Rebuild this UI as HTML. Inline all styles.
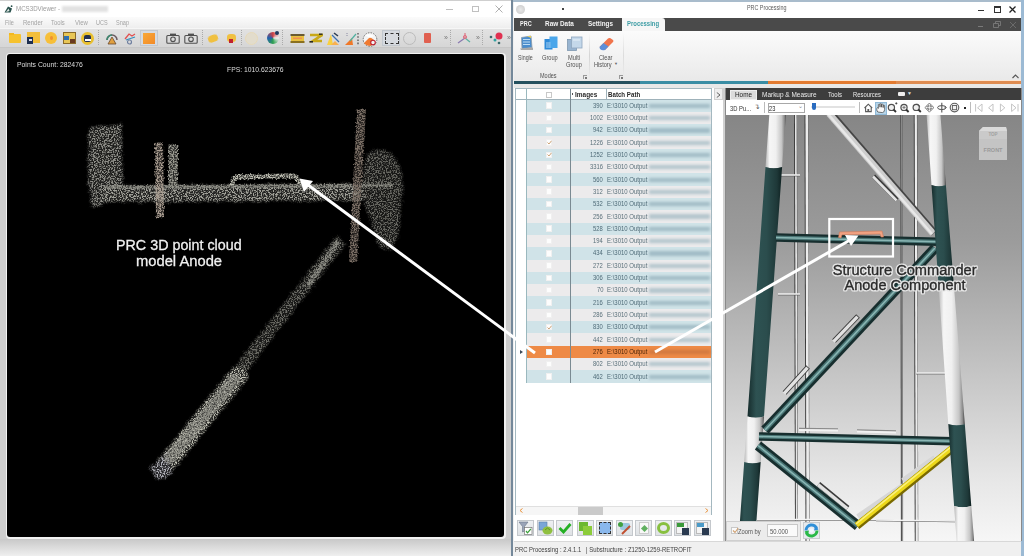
<!DOCTYPE html><html><head><meta charset="utf-8"><style>
*{margin:0;padding:0;box-sizing:border-box}
html,body{width:1024px;height:556px;overflow:hidden;background:#f0f0f0;font-family:"Liberation Sans",sans-serif}
.ab{position:absolute}
.t{position:absolute;white-space:nowrap;line-height:1}
</style></head><body>

<div class="ab" style="left:0;top:0;width:512px;height:556px;background:#d0d0d0;overflow:hidden"></div>
<div class="ab" style="left:0;top:0;width:512px;height:17px;background:#fff"></div>
<div class="ab" style="left:0;top:0;width:512px;height:1px;background:#cfcfcf"></div>
<svg class="ab" style="left:4px;top:5px" width="9" height="8" viewBox="0 0 9 8"><path d="M0.5 7.5 L4 1.5 L8 3.5 L6.5 7.5 Z" fill="#264f4a"/><path d="M2 7 L4.5 3.5 L5.5 6 Z" fill="#dfe8e6"/><circle cx="7.6" cy="1.2" r="0.9" fill="#264f4a"/></svg>
<div class="t" style="left:16.10px;top:5.40px;font-size:7.80px;color:#9a9a9a;font-weight:normal;font-family:'Liberation Sans',sans-serif;transform:scaleX(0.791);transform-origin:0 0;">MCS3DViewer -</div>
<div class="ab" style="left:62px;top:6px;width:46px;height:6px;background:#e2e2e2;filter:blur(1.3px)"></div>
<div class="ab" style="left:446px;top:9px;width:7px;height:1px;background:#bdbdbd"></div>
<div class="ab" style="left:472px;top:5.5px;width:6.5px;height:6.5px;border:1px solid #c0c0c0"></div>
<svg class="ab" style="left:495px;top:5px" width="8" height="8"><path d="M0.5 0.5L7.5 7.5M7.5 0.5L0.5 7.5" stroke="#b0b0b0" stroke-width="1"/></svg>
<div class="ab" style="left:0;top:17px;width:512px;height:11px;background:linear-gradient(#fbfbfb,#eeeeee)"></div>
<div class="t" style="left:4.80px;top:18.85px;font-size:7.50px;color:#a4a4a4;font-weight:normal;font-family:'Liberation Sans',sans-serif;transform:scaleX(0.736);transform-origin:0 0;">File</div>
<div class="t" style="left:22.60px;top:18.85px;font-size:7.50px;color:#a4a4a4;font-weight:normal;font-family:'Liberation Sans',sans-serif;transform:scaleX(0.805);transform-origin:0 0;">Render</div>
<div class="t" style="left:51.30px;top:18.85px;font-size:7.50px;color:#a4a4a4;font-weight:normal;font-family:'Liberation Sans',sans-serif;transform:scaleX(0.782);transform-origin:0 0;">Tools</div>
<div class="t" style="left:74.60px;top:18.85px;font-size:7.50px;color:#a4a4a4;font-weight:normal;font-family:'Liberation Sans',sans-serif;transform:scaleX(0.800);transform-origin:0 0;">View</div>
<div class="t" style="left:95.80px;top:18.85px;font-size:7.50px;color:#a4a4a4;font-weight:normal;font-family:'Liberation Sans',sans-serif;transform:scaleX(0.733);transform-origin:0 0;">UCS</div>
<div class="t" style="left:116.30px;top:18.85px;font-size:7.50px;color:#a4a4a4;font-weight:normal;font-family:'Liberation Sans',sans-serif;transform:scaleX(0.742);transform-origin:0 0;">Snap</div>
<div class="ab" style="left:0;top:28px;width:512px;height:20px;background:linear-gradient(#e2e2e2,#d6d6d6);border-top:1px solid #f6f6f6;border-bottom:1px solid #c6c6c6"></div>
<div class="ab" style="left:98px;top:30px;width:1px;height:16px;background:repeating-linear-gradient(#aaa 0 1px,transparent 1px 2px)"></div>
<div class="ab" style="left:202px;top:30px;width:1px;height:16px;background:repeating-linear-gradient(#aaa 0 1px,transparent 1px 2px)"></div>
<div class="ab" style="left:241px;top:30px;width:1px;height:16px;background:repeating-linear-gradient(#aaa 0 1px,transparent 1px 2px)"></div>
<div class="ab" style="left:282px;top:30px;width:1px;height:16px;background:repeating-linear-gradient(#aaa 0 1px,transparent 1px 2px)"></div>
<div class="ab" style="left:450px;top:30px;width:1px;height:16px;background:repeating-linear-gradient(#aaa 0 1px,transparent 1px 2px)"></div>
<div class="ab" style="left:482px;top:30px;width:1px;height:16px;background:repeating-linear-gradient(#aaa 0 1px,transparent 1px 2px)"></div>
<div class="ab" style="left:140px;top:30px;width:18px;height:16px;background:#d6dae0;border:1px solid #c2c8cf"></div>
<div class="ab" style="left:382px;top:30px;width:18px;height:16px;background:#d6dae0;border:1px solid #c2c8cf"></div>
<div class="ab" style="left:9px;top:34px;width:12px;height:9px;background:#f6c22e;border-radius:1px;filter:blur(0.3px);"></div><div class="ab" style="left:9px;top:33px;width:5px;height:2px;background:#f3b820;filter:blur(0.3px);"></div>
<div class="ab" style="left:27px;top:32px;width:13px;height:11px;background:#f2be3a;filter:blur(0.3px);"></div><div class="ab" style="left:27px;top:37px;width:6px;height:7px;background:#1f3050;filter:blur(0.3px);"></div><div class="ab" style="left:28.5px;top:39px;width:3px;height:2px;background:#dde;filter:blur(0.3px);"></div>
<div class="ab" style="left:45px;top:32px;width:12px;height:12px;background:#f7bf38;border-radius:50%;filter:blur(0.3px);"></div><div class="ab" style="left:49.5px;top:36px;width:3px;height:4px;background:#f09030;border-radius:50%;filter:blur(0.3px);"></div>
<div class="ab" style="left:63px;top:32px;width:13px;height:12px;background:#e8c656;border:1px solid #8a6a28;filter:blur(0.3px);"></div><div class="ab" style="left:64px;top:36px;width:5px;height:4px;background:#2f70b0;filter:blur(0.3px);"></div><div class="ab" style="left:70px;top:39px;width:5px;height:4px;background:#6a3a20;filter:blur(0.3px);"></div>
<div class="ab" style="left:81px;top:32px;width:13px;height:13px;background:#e9c030;border-radius:50%;filter:blur(0.3px);"></div><div class="ab" style="left:84px;top:34.5px;width:7px;height:7px;background:#243050;border-radius:2px;filter:blur(0.3px);"></div><div class="ab" style="left:84.5px;top:39px;width:6px;height:2px;background:#fff;filter:blur(0.3px);"></div>
<svg class="ab" style="left:105px;top:32px;filter:blur(0.3px);" width="14" height="13"><path d="M2 8 A5 5 0 0 1 12 8" stroke="#6a5a60" stroke-width="1.5" fill="none"/><path d="M2 8 A5 5 0 0 1 7 3" stroke="#3a8a70" stroke-width="1.5" fill="none"/><path d="M7 5 L3 12 L11 12 Z" fill="#e0a040" stroke="#6a4a30" stroke-width="0.8"/></svg>
<svg class="ab" style="left:123px;top:32px;filter:blur(0.3px);" width="14" height="13"><path d="M2 7 L6 2 L9 4 L12 2" stroke="#e05050" stroke-width="1.3" fill="none"/><path d="M3 8 L12 5" stroke="#3090c0" stroke-width="1.3"/><circle cx="6.5" cy="10" r="2" stroke="#7080a0" stroke-width="1.2" fill="none"/></svg>
<div class="ab" style="left:143px;top:33px;width:12px;height:11px;background:linear-gradient(135deg,#f8a838,#f28a28);filter:blur(0.3px);"></div>
<svg class="ab" style="left:166px;top:33px;filter:blur(0.3px);" width="14" height="11"><rect x="0.8" y="2.5" width="12.4" height="7.7" rx="1" stroke="#505050" stroke-width="1.1" fill="none"/><rect x="4" y="0.6" width="6" height="2" fill="#505050"/><circle cx="7" cy="6.3" r="2.3" stroke="#505050" stroke-width="1.1" fill="none"/></svg>
<svg class="ab" style="left:184px;top:33px;filter:blur(0.3px);" width="14" height="11"><rect x="0.8" y="2.5" width="12.4" height="7.7" rx="1" stroke="#505050" stroke-width="1.1" fill="none"/><rect x="4" y="0.6" width="6" height="2" fill="#505050"/><circle cx="7" cy="6.3" r="2.3" stroke="#505050" stroke-width="1.1" fill="none"/></svg>
<div class="ab" style="left:208px;top:35px;width:10px;height:7px;background:#f0c040;border-radius:40%;transform:rotate(-20deg);filter:blur(0.3px);"></div>
<div class="ab" style="left:227px;top:34px;width:9px;height:8px;background:#f0c040;border-radius:40%;filter:blur(0.3px);"></div><div class="ab" style="left:229px;top:39px;width:4px;height:4px;background:#c02030;filter:blur(0.3px);"></div>
<div class="ab" style="left:245px;top:32px;width:13px;height:13px;border:1px solid #e6d9b8;background:#e2dccc;border-radius:50%;filter:blur(0.3px);"></div>
<div class="ab" style="left:267px;top:32px;width:12px;height:12px;border-radius:50%;background:conic-gradient(#d04040,#f0f0f0,#30a050,#2060b0,#d04040);filter:blur(0.3px);"></div><div class="ab" style="left:275px;top:31px;width:4px;height:4px;border-radius:50%;background:#203a60;filter:blur(0.3px);"></div>
<svg class="ab" style="left:290px;top:33px;filter:blur(0.35px)" width="15" height="11"><rect x="0.5" y="1" width="14" height="2" fill="#6a5a30"/><rect x="1" y="3" width="13" height="5" fill="#e8c040"/><rect x="3" y="4.5" width="9" height="1.5" fill="#f09050"/><rect x="0.5" y="8" width="14" height="2" fill="#8a7020"/></svg>
<svg class="ab" style="left:309px;top:33px;filter:blur(0.35px)" width="14" height="11"><path d="M1 2 H13 L4 8 H13" stroke="#c8a818" stroke-width="2.6" fill="none"/><path d="M0.5 8.8 H4" stroke="#2a2a20" stroke-width="1.6"/><path d="M10 1.2 H13.5" stroke="#2a2a20" stroke-width="1.4"/></svg>
<svg class="ab" style="left:326px;top:32px;filter:blur(0.35px)" width="15" height="14"><path d="M1 13 L5 2 L7 13 Z" fill="#f8d040"/><path d="M5 13 L13 13 L9 9 Z" fill="#f8b050"/><path d="M6 3 L13 10" stroke="#3a70b0" stroke-width="1.2"/><path d="M8 1 L12 4" stroke="#2a3a50" stroke-width="1.5"/></svg>
<svg class="ab" style="left:344px;top:32px;filter:blur(0.35px)" width="16" height="14"><path d="M1 13 L8 6 L9 13 Z" fill="#f07828"/><path d="M14 1 V13" stroke="#444" stroke-width="1.2" stroke-dasharray="1.6 1.6"/><path d="M3 1 V4" stroke="#8888a0" stroke-dasharray="1 1"/><path d="M6 9 L12 2" stroke="#50b0a0" stroke-width="1.2"/></svg>
<svg class="ab" style="left:362px;top:31.5px;filter:blur(0.35px)" width="16" height="15"><circle cx="8" cy="7.5" r="6.8" fill="#f4f4f4" stroke="#666" stroke-width="0.9" stroke-dasharray="1.5 1.2"/><path d="M2 11 L8 5 L12 8 L9 14 Q4 14 2 11 Z" fill="#f07a30"/><path d="M3 3 Q8 1 12 4 L8 6 Z" fill="#fff"/><circle cx="11" cy="10.5" r="2.3" fill="#f4f4f4" stroke="#c02030" stroke-width="1.1"/></svg>
<div class="ab" style="left:385px;top:33px;width:14px;height:11px;border:1.3px dashed #333;filter:blur(0.3px);"></div>
<div class="ab" style="left:403px;top:32px;width:13px;height:13px;border:1px solid #bbb;border-radius:50%;filter:blur(0.3px);"></div>
<div class="ab" style="left:424px;top:33px;width:7px;height:10px;background:#e06050;border-radius:1px;filter:blur(0.3px);"></div>
<div class="t" style="left:444px;top:34px;font-size:7px;color:#777;filter:blur(0.3px);">&raquo;</div>
<div class="t" style="left:476px;top:34px;font-size:7px;color:#777;filter:blur(0.3px);">&raquo;</div>
<div class="t" style="left:507px;top:34px;font-size:7px;color:#777;filter:blur(0.3px);">&raquo;</div>
<svg class="ab" style="left:457px;top:32px;filter:blur(0.3px);" width="15" height="13"><path d="M1 11 L8 6" stroke="#8a7ab0" stroke-width="1.2"/><path d="M8 6 L13 10" stroke="#5ab0a0" stroke-width="1.2"/><path d="M8 6 V1" stroke="#e07080" stroke-width="1.2"/><circle cx="8" cy="5" r="1.6" fill="none" stroke="#e07080"/></svg>
<svg class="ab" style="left:489px;top:32px;filter:blur(0.3px);" width="14" height="13"><circle cx="10" cy="4" r="3.5" fill="#e03050"/><circle cx="2" cy="5" r="1.3" fill="#3a6a6a"/><circle cx="6" cy="8" r="1.5" fill="#30a0a0"/><circle cx="10" cy="11" r="1.3" fill="#3a6a6a"/></svg>
<div class="ab" style="left:0;top:48px;width:512px;height:508px;background:#cdcdcd"></div>
<div class="ab" style="left:6px;top:53px;width:500px;height:486px;background:#f2f2f2;border-radius:4px"></div>
<div class="ab" style="left:0;top:539px;width:512px;height:17px;background:linear-gradient(#c8c8c8,#efefef)"></div>
<div class="ab" style="left:7px;top:54px;width:497px;height:483px;background:#000;border-radius:3px"></div>
<div class="t" style="left:17.00px;top:61.10px;font-size:7.80px;color:#dcdcdc;font-weight:normal;font-family:'Liberation Sans',sans-serif;transform:scaleX(0.877);transform-origin:0 0;">Points Count: 282476</div>
<div class="t" style="left:227.10px;top:66.30px;font-size:7.80px;color:#dcdcdc;font-weight:normal;font-family:'Liberation Sans',sans-serif;transform:scaleX(0.871);transform-origin:0 0;">FPS: 1010.623676</div>
<svg class="ab" style="left:0;top:0" width="1024" height="556" viewBox="0 0 1024 556">
<defs>
<clipPath id="vpc"><rect x="7" y="54" width="497" height="483" rx="3"/></clipPath>
<filter id="spk" x="0" y="0" width="1024" height="556" filterUnits="userSpaceOnUse">
  <feTurbulence type="fractalNoise" baseFrequency="0.35" numOctaves="2" seed="3" result="dn"/>
  <feDisplacementMap in="SourceGraphic" in2="dn" scale="7" xChannelSelector="R" yChannelSelector="G" result="d"/>
  <feGaussianBlur in="d" stdDeviation="1.2" result="b"/>
  <feTurbulence type="fractalNoise" baseFrequency="0.75" numOctaves="3" seed="11" result="n"/>
  <feColorMatrix in="n" type="matrix" values="0 0 0 0 0  0 0 0 0 0  0 0 0 0 0  0 0 0 6.0 -2.7" result="m"/>
  <feComposite in="b" in2="m" operator="in" result="s"/>
  <feComponentTransfer in="b" result="haze"><feFuncA type="linear" slope="0.22"/></feComponentTransfer>
  <feMerge><feMergeNode in="haze"/><feMergeNode in="s"/></feMerge>
</filter>
<filter id="spk2" x="0" y="0" width="1024" height="556" filterUnits="userSpaceOnUse">
  <feTurbulence type="fractalNoise" baseFrequency="0.5" numOctaves="2" seed="8" result="dn"/>
  <feDisplacementMap in="SourceGraphic" in2="dn" scale="4" xChannelSelector="R" yChannelSelector="G" result="d"/>
  <feGaussianBlur in="d" stdDeviation="0.6" result="b"/>
  <feTurbulence type="fractalNoise" baseFrequency="0.75" numOctaves="3" seed="5" result="n"/>
  <feColorMatrix in="n" type="matrix" values="0 0 0 0 0  0 0 0 0 0  0 0 0 0 0  0 0 0 5.0 -2.0" result="m"/>
  <feComposite in="b" in2="m" operator="in" result="s"/>
  <feComponentTransfer in="b" result="haze"><feFuncA type="linear" slope="0.3"/></feComponentTransfer>
  <feMerge><feMergeNode in="haze"/><feMergeNode in="s"/></feMerge>
</filter>
</defs>
<g clip-path="url(#vpc)">
<g filter="url(#spk)" stroke="none">
  <path d="M89 127 L121 125 L123 190 L112 193 L101 206 L92 207 L88 180 Z" fill="#8c8c86"/>
  <path d="M102 186 L392 184 L394 200 L102 202 Z" fill="#a0a098"/>
  <path d="M366 160 C368 148 386 146 396 158 C404 170 404 192 400 206 C402 222 398 240 392 248 C386 252 378 248 376 240 L372 222 L366 208 C362 196 362 176 366 160 Z" fill="#686862"/>
  <line x1="341" y1="240" x2="232" y2="380" stroke="#6e6e68" stroke-width="12"/>
  <line x1="238" y1="376" x2="166" y2="464" stroke="#c4c4b8" stroke-width="18" stroke-linecap="round"/><path d="M150 468 L168 452 L172 474 L158 480 Z" fill="#b0b0b8"/>
</g>
<g filter="url(#spk2)" stroke="none">
  <path d="M104 185.5 L392 183.5 L392 187 L104 189 Z" fill="#8c8c84"/>
  <path d="M155 143 L163 142 L164 217 L156 218 Z" fill="#a89c90"/>
  <path d="M168 145 L178 144 L178 188 L168 188 Z" fill="#98988e"/>
  <path d="M230 186 C230 178 232 175 238 174.5 L292 173.5 C298 173.5 300 177 302 185 L297.5 185 C296 180 295 178.5 291 178.5 L238 179.5 C235 179.5 234.5 182 234.5 186 Z" fill="#bcbcb0"/>
  <path d="M357 109 L366 109 L357 262 L349 262 Z" fill="#7c7066"/>
  <path d="M306 284 L336 240 L340 243 L310 287 Z" fill="#8c8c84"/>
  <line x1="234" y1="380" x2="170" y2="458" stroke="#8a8a82" stroke-width="12" stroke-linecap="round"/>
</g>
</g>
</svg>
<div class="t" style="left:116.20px;top:237.38px;font-size:15.50px;color:#f0f0f0;font-weight:normal;font-family:'Liberation Sans',sans-serif;transform:scaleX(0.923);transform-origin:0 0;-webkit-text-stroke:0.3px #f0f0f0;">PRC 3D point cloud</div>
<div class="t" style="left:136.00px;top:253.08px;font-size:15.50px;color:#f0f0f0;font-weight:normal;font-family:'Liberation Sans',sans-serif;transform:scaleX(0.951);transform-origin:0 0;-webkit-text-stroke:0.3px #f0f0f0;">model Anode</div>
<div class="ab" style="left:512px;top:0;width:512px;height:556px;background:#f0f0f0"></div>
<div class="ab" style="left:512px;top:0;width:512px;height:1.5px;background:#a9bccc"></div>
<div class="ab" style="left:511.2px;top:0;width:2.2px;height:556px;background:#74889a"></div>
<div class="ab" style="left:1021px;top:0;width:3px;height:556px;background:#9cbad4"></div>
<div class="ab" style="left:513.5px;top:1.5px;width:507.5px;height:16.5px;background:#fff"></div>
<div class="ab" style="left:516px;top:4.5px;width:9px;height:9px;border-radius:50%;background:radial-gradient(#e8e8e8,#c8c8c8)"></div>
<div class="ab" style="left:561.5px;top:8px;width:2px;height:2px;background:#444"></div>
<div class="t" style="left:747.20px;top:5.14px;font-size:6.80px;color:#5a5a5a;font-weight:normal;font-family:'Liberation Sans',sans-serif;transform:scaleX(0.790);transform-origin:0 0;">PRC Processing</div>
<div class="ab" style="left:977.5px;top:9.5px;width:6px;height:1.3px;background:#333"></div>
<div class="ab" style="left:994px;top:5.5px;width:7px;height:7px;border:1px solid #333;border-top-width:2px"></div>
<svg class="ab" style="left:1009px;top:6px" width="7" height="7"><path d="M0.5 0.5L6.5 6.5M6.5 0.5L0.5 6.5" stroke="#222" stroke-width="1.3"/></svg>
<div class="ab" style="left:513.5px;top:18px;width:507.5px;height:13px;background:#4a4a4a"></div>
<div class="t" style="left:519.80px;top:21.06px;font-size:6.90px;color:#f4f4f4;font-weight:bold;font-family:'Liberation Sans',sans-serif;transform:scaleX(0.803);transform-origin:0 0;">PRC</div>
<div class="t" style="left:544.80px;top:21.06px;font-size:6.90px;color:#f4f4f4;font-weight:bold;font-family:'Liberation Sans',sans-serif;transform:scaleX(0.930);transform-origin:0 0;">Raw Data</div>
<div class="t" style="left:587.80px;top:21.06px;font-size:6.90px;color:#f4f4f4;font-weight:bold;font-family:'Liberation Sans',sans-serif;transform:scaleX(0.918);transform-origin:0 0;">Settings</div>
<div class="ab" style="left:622px;top:18px;width:42.5px;height:13px;background:#f6f6f6;border-radius:0 3px 0 0"></div>
<div class="t" style="left:626.80px;top:21.06px;font-size:6.90px;color:#3c9ca4;font-weight:bold;font-family:'Liberation Sans',sans-serif;transform:scaleX(0.863);transform-origin:0 0;">Processing</div>
<div class="ab" style="left:978px;top:25.5px;width:5px;height:1px;background:#7a7a7a"></div>
<svg class="ab" style="left:993px;top:21px" width="8" height="7"><path d="M0.5 2.5 H5.5 V6.5 H0.5 Z M2.5 2.5 V0.5 H7.5 V4.5 H5.5" stroke="#7a7a7a" stroke-width="0.9" fill="none"/></svg>
<svg class="ab" style="left:1010px;top:22px" width="6" height="6"><path d="M0 0L6 6M6 0L0 6" stroke="#6e6e6e" stroke-width="0.9"/></svg>
<div class="ab" style="left:513.5px;top:31px;width:507.5px;height:50px;background:linear-gradient(#fbfbfb,#e9e9e9)"></div>
<div class="ab" style="left:588.8px;top:33px;width:1px;height:46px;background:linear-gradient(transparent,#d4d4d4,transparent)"></div>
<div class="ab" style="left:623px;top:33px;width:1px;height:46px;background:linear-gradient(transparent,#dcdcdc,transparent)"></div>
<svg class="ab" style="left:519px;top:35px" width="15" height="16"><path d="M2.5 2.5 L12 1 L13 12.5 L3 13.5 Z" fill="#4a8ccc" stroke="#8a9aa8" stroke-width="0.8"/><path d="M4 4.5H11M4 7H11M4 9.5H11" stroke="#bcdcf4" stroke-width="1"/><path d="M8 1 L12 1 L12 3 Z" fill="#f0d050"/><path d="M1 13.5 L14 12.5 L14 15 L2 15Z" fill="#a8a8a8"/></svg>
<svg class="ab" style="left:543.5px;top:36px" width="14" height="14"><rect x="0.5" y="3" width="8" height="10.5" fill="#2e8ad8"/><rect x="5.5" y="0.5" width="8" height="11.5" fill="#4aa6ea"/><path d="M2 7H6.5M2 9H6.5M2 11H6.5" stroke="#cfe6fa" stroke-width="0.8"/></svg>
<svg class="ab" style="left:567px;top:36px" width="16" height="15"><rect x="0.5" y="3.5" width="9" height="11" fill="#98b4d0" stroke="#7f98b0" stroke-width="0.8"/><rect x="4.5" y="1" width="10.5" height="11" fill="#c4d8ea" stroke="#8ea6be" stroke-width="0.8"/><path d="M6 4H13" stroke="#e8f2fa"/></svg>
<svg class="ab" style="left:598px;top:35.5px" width="17" height="15"><path d="M1.5 11 L10 2.5 Q11 1.5 12.5 2.3 L15 4 Q16 5 15 6 L7 14 Z" fill="#f0744c"/><path d="M1.5 11 L5.5 7 L10.5 10.5 L7 14 Q4 15 2 13 Z" fill="#5c8ed8"/></svg>
<div class="t" style="left:518.40px;top:55.18px;font-size:6.40px;color:#505050;font-weight:normal;font-family:'Liberation Sans',sans-serif;transform:scaleX(0.826);transform-origin:0 0;">Single</div>
<div class="t" style="left:541.90px;top:55.18px;font-size:6.40px;color:#505050;font-weight:normal;font-family:'Liberation Sans',sans-serif;transform:scaleX(0.888);transform-origin:0 0;">Group</div>
<div class="t" style="left:568.00px;top:55.18px;font-size:6.40px;color:#505050;font-weight:normal;font-family:'Liberation Sans',sans-serif;transform:scaleX(0.888);transform-origin:0 0;">Multi</div>
<div class="t" style="left:565.90px;top:61.98px;font-size:6.40px;color:#505050;font-weight:normal;font-family:'Liberation Sans',sans-serif;transform:scaleX(0.891);transform-origin:0 0;">Group</div>
<div class="t" style="left:598.75px;top:55.18px;font-size:6.40px;color:#505050;font-weight:normal;font-family:'Liberation Sans',sans-serif;transform:scaleX(0.879);transform-origin:0 0;">Clear</div>
<div class="t" style="left:594.00px;top:61.98px;font-size:6.40px;color:#505050;font-weight:normal;font-family:'Liberation Sans',sans-serif;transform:scaleX(0.884);transform-origin:0 0;">History</div>
<div class="t" style="left:539.90px;top:72.88px;font-size:6.40px;color:#505050;font-weight:normal;font-family:'Liberation Sans',sans-serif;transform:scaleX(0.864);transform-origin:0 0;">Modes</div>
<div class="t" style="left:614px;top:62px;font-size:4px;color:#666">&#9660;</div>
<div class="ab" style="left:582.5px;top:74.5px;width:4px;height:4px;border-left:0.8px solid #999;border-top:0.8px solid #999"></div><div class="ab" style="left:584.5px;top:76.5px;width:2px;height:2px;background:#777"></div>
<div class="ab" style="left:619px;top:74.5px;width:4px;height:4px;border-left:0.8px solid #999;border-top:0.8px solid #999"></div><div class="ab" style="left:621px;top:76.5px;width:2px;height:2px;background:#777"></div>
<svg class="ab" style="left:1011.5px;top:74px" width="7" height="5"><path d="M0.5 4 L3.5 1 L6.5 4" stroke="#555" stroke-width="1.1" fill="none"/></svg>
<div class="ab" style="left:513.5px;top:81px;width:126.5px;height:3.3px;background:#24505e"></div>
<div class="ab" style="left:640px;top:81px;width:127.5px;height:3.3px;background:#3a8da4"></div>
<div class="ab" style="left:767.5px;top:81px;width:128.5px;height:3.3px;background:#e27a30"></div>
<div class="ab" style="left:896px;top:81px;width:125px;height:3.3px;background:#de8c52"></div>
<div class="ab" style="left:767.5px;top:80.2px;width:253.5px;height:0.8px;background:#fbe6d4"></div>
<div class="ab" style="left:513.5px;top:84.3px;width:507.5px;height:3.7px;background:#e8e8e8"></div>
<div class="ab" style="left:513.5px;top:88px;width:210px;height:453px;background:#fff"></div>
<div class="ab" style="left:723px;top:88px;width:2px;height:453px;background:#d0d0d0"></div>
<div class="ab" style="left:514.5px;top:88px;width:197px;height:427px;border:1px solid #a4b8c0;background:#fff"></div>
<div class="ab" style="left:515.5px;top:89px;width:195px;height:10.5px;background:#fff;border-bottom:1px solid #9fb2ba"></div>
<div class="ab" style="left:545.5px;top:91.5px;width:6px;height:6px;border:0.8px solid #c8c8c8;background:#fff"></div>
<div class="t" style="left:574.50px;top:90.67px;font-size:7.00px;color:#2a2a2a;font-weight:bold;font-family:'Liberation Sans',sans-serif;transform:scaleX(0.924);transform-origin:0 0;">Images</div>
<div class="t" style="left:607.80px;top:90.67px;font-size:7.00px;color:#2a2a2a;font-weight:bold;font-family:'Liberation Sans',sans-serif;transform:scaleX(0.881);transform-origin:0 0;">Batch Path</div>
<div class="ab" style="left:572px;top:93px;width:1px;height:2px;background:#555"></div>
<div class="ab" style="left:526.5px;top:99.50px;width:184.5px;height:12.31px;background:#d0e3e8"></div>
<div class="ab" style="left:649px;top:103.70px;width:61px;height:4.2px;background:#9fbac4;filter:blur(1.4px)"></div>
<div class="t" style="left:593.24px;top:102.74px;font-size:6.80px;color:#4f6b78;font-weight:normal;font-family:'Liberation Sans',sans-serif;transform:scaleX(0.860);transform-origin:0 0;">390</div>
<div class="t" style="left:607.00px;top:102.74px;font-size:6.80px;color:#4f6b78;font-weight:normal;font-family:'Liberation Sans',sans-serif;transform:scaleX(0.883);transform-origin:0 0;">E:\3010 Output</div>
<div class="ab" style="left:545.5px;top:102.30px;width:6.5px;height:6.5px;background:#fdfdfd;border:0.5px solid #f0f0f0"></div>
<div class="ab" style="left:526.5px;top:111.81px;width:184.5px;height:12.31px;background:#ecebec"></div>
<div class="ab" style="left:649px;top:116.01px;width:61px;height:4.2px;background:#b2c4cc;filter:blur(1.4px)"></div>
<div class="t" style="left:589.99px;top:115.05px;font-size:6.80px;color:#5a707a;font-weight:normal;font-family:'Liberation Sans',sans-serif;transform:scaleX(0.860);transform-origin:0 0;">1002</div>
<div class="t" style="left:607.00px;top:115.05px;font-size:6.80px;color:#5a707a;font-weight:normal;font-family:'Liberation Sans',sans-serif;transform:scaleX(0.883);transform-origin:0 0;">E:\3010 Output</div>
<div class="ab" style="left:545.5px;top:114.61px;width:6.5px;height:6.5px;background:#fdfdfd;border:0.5px solid #f0f0f0"></div>
<div class="ab" style="left:526.5px;top:124.12px;width:184.5px;height:12.31px;background:#d0e3e8"></div>
<div class="ab" style="left:649px;top:128.32px;width:61px;height:4.2px;background:#9fbac4;filter:blur(1.4px)"></div>
<div class="t" style="left:593.24px;top:127.36px;font-size:6.80px;color:#4f6b78;font-weight:normal;font-family:'Liberation Sans',sans-serif;transform:scaleX(0.860);transform-origin:0 0;">942</div>
<div class="t" style="left:607.00px;top:127.36px;font-size:6.80px;color:#4f6b78;font-weight:normal;font-family:'Liberation Sans',sans-serif;transform:scaleX(0.883);transform-origin:0 0;">E:\3010 Output</div>
<div class="ab" style="left:545.5px;top:126.92px;width:6.5px;height:6.5px;background:#fdfdfd;border:0.5px solid #f0f0f0"></div>
<div class="ab" style="left:526.5px;top:136.43px;width:184.5px;height:12.31px;background:#ecebec"></div>
<div class="ab" style="left:649px;top:140.63px;width:61px;height:4.2px;background:#b2c4cc;filter:blur(1.4px)"></div>
<div class="t" style="left:589.99px;top:139.67px;font-size:6.80px;color:#5a707a;font-weight:normal;font-family:'Liberation Sans',sans-serif;transform:scaleX(0.860);transform-origin:0 0;">1226</div>
<div class="t" style="left:607.00px;top:139.67px;font-size:6.80px;color:#5a707a;font-weight:normal;font-family:'Liberation Sans',sans-serif;transform:scaleX(0.883);transform-origin:0 0;">E:\3010 Output</div>
<div class="ab" style="left:545.5px;top:139.23px;width:6.5px;height:6.5px;background:#fdfdfd;border:0.5px solid #f0f0f0"></div>
<svg class="ab" style="left:546.5px;top:139.93px" width="5" height="5"><path d="M0.5 2.5 L2 4 L4.5 0.8" stroke="#c89868" stroke-width="0.9" fill="none"/></svg>
<div class="ab" style="left:526.5px;top:148.74px;width:184.5px;height:12.31px;background:#d0e3e8"></div>
<div class="ab" style="left:649px;top:152.94px;width:61px;height:4.2px;background:#9fbac4;filter:blur(1.4px)"></div>
<div class="t" style="left:589.99px;top:151.98px;font-size:6.80px;color:#4f6b78;font-weight:normal;font-family:'Liberation Sans',sans-serif;transform:scaleX(0.860);transform-origin:0 0;">1252</div>
<div class="t" style="left:607.00px;top:151.98px;font-size:6.80px;color:#4f6b78;font-weight:normal;font-family:'Liberation Sans',sans-serif;transform:scaleX(0.883);transform-origin:0 0;">E:\3010 Output</div>
<div class="ab" style="left:545.5px;top:151.54px;width:6.5px;height:6.5px;background:#fdfdfd;border:0.5px solid #f0f0f0"></div>
<svg class="ab" style="left:546.5px;top:152.24px" width="5" height="5"><path d="M0.5 2.5 L2 4 L4.5 0.8" stroke="#c89868" stroke-width="0.9" fill="none"/></svg>
<div class="ab" style="left:526.5px;top:161.05px;width:184.5px;height:12.31px;background:#ecebec"></div>
<div class="ab" style="left:649px;top:165.25px;width:61px;height:4.2px;background:#b2c4cc;filter:blur(1.4px)"></div>
<div class="t" style="left:589.99px;top:164.29px;font-size:6.80px;color:#5a707a;font-weight:normal;font-family:'Liberation Sans',sans-serif;transform:scaleX(0.860);transform-origin:0 0;">3316</div>
<div class="t" style="left:607.00px;top:164.29px;font-size:6.80px;color:#5a707a;font-weight:normal;font-family:'Liberation Sans',sans-serif;transform:scaleX(0.883);transform-origin:0 0;">E:\3010 Output</div>
<div class="ab" style="left:545.5px;top:163.85px;width:6.5px;height:6.5px;background:#fdfdfd;border:0.5px solid #f0f0f0"></div>
<div class="ab" style="left:526.5px;top:173.36px;width:184.5px;height:12.31px;background:#d0e3e8"></div>
<div class="ab" style="left:649px;top:177.56px;width:61px;height:4.2px;background:#9fbac4;filter:blur(1.4px)"></div>
<div class="t" style="left:593.24px;top:176.60px;font-size:6.80px;color:#4f6b78;font-weight:normal;font-family:'Liberation Sans',sans-serif;transform:scaleX(0.860);transform-origin:0 0;">560</div>
<div class="t" style="left:607.00px;top:176.60px;font-size:6.80px;color:#4f6b78;font-weight:normal;font-family:'Liberation Sans',sans-serif;transform:scaleX(0.883);transform-origin:0 0;">E:\3010 Output</div>
<div class="ab" style="left:545.5px;top:176.16px;width:6.5px;height:6.5px;background:#fdfdfd;border:0.5px solid #f0f0f0"></div>
<div class="ab" style="left:526.5px;top:185.67px;width:184.5px;height:12.31px;background:#ecebec"></div>
<div class="ab" style="left:649px;top:189.87px;width:61px;height:4.2px;background:#b2c4cc;filter:blur(1.4px)"></div>
<div class="t" style="left:593.24px;top:188.91px;font-size:6.80px;color:#5a707a;font-weight:normal;font-family:'Liberation Sans',sans-serif;transform:scaleX(0.860);transform-origin:0 0;">312</div>
<div class="t" style="left:607.00px;top:188.91px;font-size:6.80px;color:#5a707a;font-weight:normal;font-family:'Liberation Sans',sans-serif;transform:scaleX(0.883);transform-origin:0 0;">E:\3010 Output</div>
<div class="ab" style="left:545.5px;top:188.47px;width:6.5px;height:6.5px;background:#fdfdfd;border:0.5px solid #f0f0f0"></div>
<div class="ab" style="left:526.5px;top:197.98px;width:184.5px;height:12.31px;background:#d0e3e8"></div>
<div class="ab" style="left:649px;top:202.18px;width:61px;height:4.2px;background:#9fbac4;filter:blur(1.4px)"></div>
<div class="t" style="left:593.24px;top:201.22px;font-size:6.80px;color:#4f6b78;font-weight:normal;font-family:'Liberation Sans',sans-serif;transform:scaleX(0.860);transform-origin:0 0;">532</div>
<div class="t" style="left:607.00px;top:201.22px;font-size:6.80px;color:#4f6b78;font-weight:normal;font-family:'Liberation Sans',sans-serif;transform:scaleX(0.883);transform-origin:0 0;">E:\3010 Output</div>
<div class="ab" style="left:545.5px;top:200.78px;width:6.5px;height:6.5px;background:#fdfdfd;border:0.5px solid #f0f0f0"></div>
<div class="ab" style="left:526.5px;top:210.29px;width:184.5px;height:12.31px;background:#ecebec"></div>
<div class="ab" style="left:649px;top:214.49px;width:61px;height:4.2px;background:#b2c4cc;filter:blur(1.4px)"></div>
<div class="t" style="left:593.24px;top:213.53px;font-size:6.80px;color:#5a707a;font-weight:normal;font-family:'Liberation Sans',sans-serif;transform:scaleX(0.860);transform-origin:0 0;">256</div>
<div class="t" style="left:607.00px;top:213.53px;font-size:6.80px;color:#5a707a;font-weight:normal;font-family:'Liberation Sans',sans-serif;transform:scaleX(0.883);transform-origin:0 0;">E:\3010 Output</div>
<div class="ab" style="left:545.5px;top:213.09px;width:6.5px;height:6.5px;background:#fdfdfd;border:0.5px solid #f0f0f0"></div>
<div class="ab" style="left:526.5px;top:222.60px;width:184.5px;height:12.31px;background:#d0e3e8"></div>
<div class="ab" style="left:649px;top:226.80px;width:61px;height:4.2px;background:#9fbac4;filter:blur(1.4px)"></div>
<div class="t" style="left:593.24px;top:225.84px;font-size:6.80px;color:#4f6b78;font-weight:normal;font-family:'Liberation Sans',sans-serif;transform:scaleX(0.860);transform-origin:0 0;">528</div>
<div class="t" style="left:607.00px;top:225.84px;font-size:6.80px;color:#4f6b78;font-weight:normal;font-family:'Liberation Sans',sans-serif;transform:scaleX(0.883);transform-origin:0 0;">E:\3010 Output</div>
<div class="ab" style="left:545.5px;top:225.40px;width:6.5px;height:6.5px;background:#fdfdfd;border:0.5px solid #f0f0f0"></div>
<div class="ab" style="left:526.5px;top:234.91px;width:184.5px;height:12.31px;background:#ecebec"></div>
<div class="ab" style="left:649px;top:239.11px;width:61px;height:4.2px;background:#b2c4cc;filter:blur(1.4px)"></div>
<div class="t" style="left:593.24px;top:238.15px;font-size:6.80px;color:#5a707a;font-weight:normal;font-family:'Liberation Sans',sans-serif;transform:scaleX(0.860);transform-origin:0 0;">194</div>
<div class="t" style="left:607.00px;top:238.15px;font-size:6.80px;color:#5a707a;font-weight:normal;font-family:'Liberation Sans',sans-serif;transform:scaleX(0.883);transform-origin:0 0;">E:\3010 Output</div>
<div class="ab" style="left:545.5px;top:237.71px;width:6.5px;height:6.5px;background:#fdfdfd;border:0.5px solid #f0f0f0"></div>
<div class="ab" style="left:526.5px;top:247.22px;width:184.5px;height:12.31px;background:#d0e3e8"></div>
<div class="ab" style="left:649px;top:251.42px;width:61px;height:4.2px;background:#9fbac4;filter:blur(1.4px)"></div>
<div class="t" style="left:593.24px;top:250.46px;font-size:6.80px;color:#4f6b78;font-weight:normal;font-family:'Liberation Sans',sans-serif;transform:scaleX(0.860);transform-origin:0 0;">434</div>
<div class="t" style="left:607.00px;top:250.46px;font-size:6.80px;color:#4f6b78;font-weight:normal;font-family:'Liberation Sans',sans-serif;transform:scaleX(0.883);transform-origin:0 0;">E:\3010 Output</div>
<div class="ab" style="left:545.5px;top:250.02px;width:6.5px;height:6.5px;background:#fdfdfd;border:0.5px solid #f0f0f0"></div>
<div class="ab" style="left:526.5px;top:259.53px;width:184.5px;height:12.31px;background:#ecebec"></div>
<div class="ab" style="left:649px;top:263.73px;width:61px;height:4.2px;background:#b2c4cc;filter:blur(1.4px)"></div>
<div class="t" style="left:593.24px;top:262.77px;font-size:6.80px;color:#5a707a;font-weight:normal;font-family:'Liberation Sans',sans-serif;transform:scaleX(0.860);transform-origin:0 0;">272</div>
<div class="t" style="left:607.00px;top:262.77px;font-size:6.80px;color:#5a707a;font-weight:normal;font-family:'Liberation Sans',sans-serif;transform:scaleX(0.883);transform-origin:0 0;">E:\3010 Output</div>
<div class="ab" style="left:545.5px;top:262.33px;width:6.5px;height:6.5px;background:#fdfdfd;border:0.5px solid #f0f0f0"></div>
<div class="ab" style="left:526.5px;top:271.84px;width:184.5px;height:12.31px;background:#d0e3e8"></div>
<div class="ab" style="left:649px;top:276.04px;width:61px;height:4.2px;background:#9fbac4;filter:blur(1.4px)"></div>
<div class="t" style="left:593.24px;top:275.08px;font-size:6.80px;color:#4f6b78;font-weight:normal;font-family:'Liberation Sans',sans-serif;transform:scaleX(0.860);transform-origin:0 0;">306</div>
<div class="t" style="left:607.00px;top:275.08px;font-size:6.80px;color:#4f6b78;font-weight:normal;font-family:'Liberation Sans',sans-serif;transform:scaleX(0.883);transform-origin:0 0;">E:\3010 Output</div>
<div class="ab" style="left:545.5px;top:274.64px;width:6.5px;height:6.5px;background:#fdfdfd;border:0.5px solid #f0f0f0"></div>
<div class="ab" style="left:526.5px;top:284.15px;width:184.5px;height:12.31px;background:#ecebec"></div>
<div class="ab" style="left:649px;top:288.35px;width:61px;height:4.2px;background:#b2c4cc;filter:blur(1.4px)"></div>
<div class="t" style="left:596.50px;top:287.39px;font-size:6.80px;color:#5a707a;font-weight:normal;font-family:'Liberation Sans',sans-serif;transform:scaleX(0.860);transform-origin:0 0;">70</div>
<div class="t" style="left:607.00px;top:287.39px;font-size:6.80px;color:#5a707a;font-weight:normal;font-family:'Liberation Sans',sans-serif;transform:scaleX(0.883);transform-origin:0 0;">E:\3010 Output</div>
<div class="ab" style="left:545.5px;top:286.95px;width:6.5px;height:6.5px;background:#fdfdfd;border:0.5px solid #f0f0f0"></div>
<div class="ab" style="left:526.5px;top:296.46px;width:184.5px;height:12.31px;background:#d0e3e8"></div>
<div class="ab" style="left:649px;top:300.66px;width:61px;height:4.2px;background:#9fbac4;filter:blur(1.4px)"></div>
<div class="t" style="left:593.24px;top:299.70px;font-size:6.80px;color:#4f6b78;font-weight:normal;font-family:'Liberation Sans',sans-serif;transform:scaleX(0.860);transform-origin:0 0;">216</div>
<div class="t" style="left:607.00px;top:299.70px;font-size:6.80px;color:#4f6b78;font-weight:normal;font-family:'Liberation Sans',sans-serif;transform:scaleX(0.883);transform-origin:0 0;">E:\3010 Output</div>
<div class="ab" style="left:545.5px;top:299.26px;width:6.5px;height:6.5px;background:#fdfdfd;border:0.5px solid #f0f0f0"></div>
<div class="ab" style="left:526.5px;top:308.77px;width:184.5px;height:12.31px;background:#ecebec"></div>
<div class="ab" style="left:649px;top:312.97px;width:61px;height:4.2px;background:#b2c4cc;filter:blur(1.4px)"></div>
<div class="t" style="left:593.24px;top:312.01px;font-size:6.80px;color:#5a707a;font-weight:normal;font-family:'Liberation Sans',sans-serif;transform:scaleX(0.860);transform-origin:0 0;">286</div>
<div class="t" style="left:607.00px;top:312.01px;font-size:6.80px;color:#5a707a;font-weight:normal;font-family:'Liberation Sans',sans-serif;transform:scaleX(0.883);transform-origin:0 0;">E:\3010 Output</div>
<div class="ab" style="left:545.5px;top:311.57px;width:6.5px;height:6.5px;background:#fdfdfd;border:0.5px solid #f0f0f0"></div>
<div class="ab" style="left:526.5px;top:321.08px;width:184.5px;height:12.31px;background:#d0e3e8"></div>
<div class="ab" style="left:649px;top:325.28px;width:61px;height:4.2px;background:#9fbac4;filter:blur(1.4px)"></div>
<div class="t" style="left:593.24px;top:324.32px;font-size:6.80px;color:#4f6b78;font-weight:normal;font-family:'Liberation Sans',sans-serif;transform:scaleX(0.860);transform-origin:0 0;">830</div>
<div class="t" style="left:607.00px;top:324.32px;font-size:6.80px;color:#4f6b78;font-weight:normal;font-family:'Liberation Sans',sans-serif;transform:scaleX(0.883);transform-origin:0 0;">E:\3010 Output</div>
<div class="ab" style="left:545.5px;top:323.88px;width:6.5px;height:6.5px;background:#fdfdfd;border:0.5px solid #f0f0f0"></div>
<svg class="ab" style="left:546.5px;top:324.58px" width="5" height="5"><path d="M0.5 2.5 L2 4 L4.5 0.8" stroke="#c89868" stroke-width="0.9" fill="none"/></svg>
<div class="ab" style="left:526.5px;top:333.39px;width:184.5px;height:12.31px;background:#ecebec"></div>
<div class="ab" style="left:649px;top:337.59px;width:61px;height:4.2px;background:#b2c4cc;filter:blur(1.4px)"></div>
<div class="t" style="left:593.24px;top:336.63px;font-size:6.80px;color:#5a707a;font-weight:normal;font-family:'Liberation Sans',sans-serif;transform:scaleX(0.860);transform-origin:0 0;">442</div>
<div class="t" style="left:607.00px;top:336.63px;font-size:6.80px;color:#5a707a;font-weight:normal;font-family:'Liberation Sans',sans-serif;transform:scaleX(0.883);transform-origin:0 0;">E:\3010 Output</div>
<div class="ab" style="left:545.5px;top:336.19px;width:6.5px;height:6.5px;background:#fdfdfd;border:0.5px solid #f0f0f0"></div>
<div class="ab" style="left:526.5px;top:345.70px;width:184.5px;height:12.31px;background:#ee8a46"></div>
<div class="ab" style="left:649px;top:349.90px;width:61px;height:4.2px;background:#d07840;filter:blur(1.4px)"></div>
<div class="t" style="left:593.24px;top:348.94px;font-size:6.80px;color:#4a2408;font-weight:normal;font-family:'Liberation Sans',sans-serif;transform:scaleX(0.860);transform-origin:0 0;">276</div>
<div class="t" style="left:607.00px;top:348.94px;font-size:6.80px;color:#4a2408;font-weight:normal;font-family:'Liberation Sans',sans-serif;transform:scaleX(0.883);transform-origin:0 0;">E:\3010 Output</div>
<div class="ab" style="left:545.5px;top:348.50px;width:6.5px;height:6.5px;background:#fdfdfd;border:0.5px solid #f0f0f0"></div>
<div class="ab" style="left:526.5px;top:358.01px;width:184.5px;height:12.31px;background:#ecebec"></div>
<div class="ab" style="left:649px;top:362.21px;width:61px;height:4.2px;background:#b2c4cc;filter:blur(1.4px)"></div>
<div class="t" style="left:593.24px;top:361.25px;font-size:6.80px;color:#5a707a;font-weight:normal;font-family:'Liberation Sans',sans-serif;transform:scaleX(0.860);transform-origin:0 0;">802</div>
<div class="t" style="left:607.00px;top:361.25px;font-size:6.80px;color:#5a707a;font-weight:normal;font-family:'Liberation Sans',sans-serif;transform:scaleX(0.883);transform-origin:0 0;">E:\3010 Output</div>
<div class="ab" style="left:545.5px;top:360.81px;width:6.5px;height:6.5px;background:#fdfdfd;border:0.5px solid #f0f0f0"></div>
<div class="ab" style="left:526.5px;top:370.32px;width:184.5px;height:12.31px;background:#d0e3e8"></div>
<div class="ab" style="left:649px;top:374.52px;width:61px;height:4.2px;background:#9fbac4;filter:blur(1.4px)"></div>
<div class="t" style="left:593.24px;top:373.56px;font-size:6.80px;color:#4f6b78;font-weight:normal;font-family:'Liberation Sans',sans-serif;transform:scaleX(0.860);transform-origin:0 0;">462</div>
<div class="t" style="left:607.00px;top:373.56px;font-size:6.80px;color:#4f6b78;font-weight:normal;font-family:'Liberation Sans',sans-serif;transform:scaleX(0.883);transform-origin:0 0;">E:\3010 Output</div>
<div class="ab" style="left:545.5px;top:373.12px;width:6.5px;height:6.5px;background:#fdfdfd;border:0.5px solid #f0f0f0"></div>
<div class="ab" style="left:526px;top:89px;width:1.3px;height:293.63px;background:#9ab8be"></div>
<div class="ab" style="left:570.3px;top:89px;width:1px;height:293.63px;background:#7a8a92"></div>
<div class="ab" style="left:605.5px;top:89px;width:1px;height:10.5px;background:#9fb2ba"></div>
<div class="ab" style="left:519.5px;top:349.5px;width:0;height:0;border-left:3px solid #3a4a5a;border-top:2px solid transparent;border-bottom:2px solid transparent"></div>
<div class="ab" style="left:515.5px;top:505.5px;width:195px;height:9px;background:#f6f6f6;border-top:1px solid #e0e0e0"></div>
<div class="ab" style="left:577.6px;top:506.5px;width:25.7px;height:8px;background:#cacaca"></div>
<svg class="ab" style="left:519px;top:508px" width="4" height="5"><path d="M3.5 0.5 L1 2.5 L3.5 4.5" stroke="#e89440" stroke-width="1" fill="none"/></svg>
<svg class="ab" style="left:704.5px;top:508px" width="4" height="5"><path d="M0.5 0.5 L3 2.5 L0.5 4.5" stroke="#e89440" stroke-width="1" fill="none"/></svg>
<div class="ab" style="left:713.5px;top:88px;width:9px;height:12px;background:#eeeeee;border:1px solid #d0d0d0"></div>
<svg class="ab" style="left:716px;top:91.5px" width="5" height="6"><path d="M0.8 0.5 L4 3 L0.8 5.5" stroke="#555" stroke-width="0.9" fill="none"/></svg>
<div class="ab" style="left:516.5px;top:519.5px;width:17.4px;height:16.5px;background:linear-gradient(#eef0f2,#dfe2e5);border:1px solid #c4c8cc"></div>
<div class="ab" style="left:536.5px;top:519.5px;width:17.4px;height:16.5px;background:linear-gradient(#eef0f2,#dfe2e5);border:1px solid #c4c8cc"></div>
<div class="ab" style="left:556.0px;top:519.5px;width:17.4px;height:16.5px;background:linear-gradient(#eef0f2,#dfe2e5);border:1px solid #c4c8cc"></div>
<div class="ab" style="left:576.5px;top:519.5px;width:17.4px;height:16.5px;background:linear-gradient(#eef0f2,#dfe2e5);border:1px solid #c4c8cc"></div>
<div class="ab" style="left:596.0px;top:519.5px;width:17.4px;height:16.5px;background:linear-gradient(#eef0f2,#dfe2e5);border:1px solid #c4c8cc"></div>
<div class="ab" style="left:615.5px;top:519.5px;width:17.4px;height:16.5px;background:linear-gradient(#eef0f2,#dfe2e5);border:1px solid #c4c8cc"></div>
<div class="ab" style="left:635.0px;top:519.5px;width:17.4px;height:16.5px;background:linear-gradient(#eef0f2,#dfe2e5);border:1px solid #c4c8cc"></div>
<div class="ab" style="left:654.5px;top:519.5px;width:17.4px;height:16.5px;background:linear-gradient(#eef0f2,#dfe2e5);border:1px solid #c4c8cc"></div>
<div class="ab" style="left:674.0px;top:519.5px;width:17.4px;height:16.5px;background:linear-gradient(#eef0f2,#dfe2e5);border:1px solid #c4c8cc"></div>
<div class="ab" style="left:693.5px;top:519.5px;width:17.4px;height:16.5px;background:linear-gradient(#eef0f2,#dfe2e5);border:1px solid #c4c8cc"></div>
<svg class="ab" style="left:518px;top:521px" width="15" height="14"><path d="M1 1 H10 L6.5 5.5 V10 L4.5 11 V5.5 Z" fill="#9aa4b8" stroke="#6a7488" stroke-width="0.6"/><rect x="6.5" y="6.5" width="7.5" height="7" fill="#fff" stroke="#777" stroke-width="0.7"/><path d="M8 10 L9.5 11.8 L12.8 8" stroke="#3aa03a" stroke-width="1.2" fill="none"/></svg>
<svg class="ab" style="left:538px;top:521px" width="15" height="14"><rect x="1" y="1" width="8" height="8" fill="#7aa6d8" stroke="#5a7ea8" stroke-width="0.6"/><ellipse cx="9.5" cy="9.5" rx="5" ry="4" fill="#90c040"/><path d="M7 9 L9.5 7 L12 9" stroke="#5a8a20" stroke-width="0.8" fill="none"/></svg>
<svg class="ab" style="left:558px;top:522px" width="14" height="12"><path d="M1.5 6 L5.5 10 L12.5 2" stroke="#24b024" stroke-width="2.8" fill="none"/></svg>
<div class="ab" style="left:579px;top:522px;width:9px;height:9px;background:#6cb830"></div><div class="ab" style="left:583px;top:526px;width:9px;height:9px;background:#8ccc3a"></div>
<div class="ab" style="left:599px;top:522px;width:12px;height:12px;background:#8ab8ec;border:1px dashed #333"></div>
<svg class="ab" style="left:617px;top:521px" width="15" height="14"><rect x="3" y="2" width="10" height="7" rx="2" fill="#9cc8e0"/><circle cx="3.5" cy="3.5" r="2.5" fill="#40a040"/><path d="M5 13 L13 5" stroke="#c05030" stroke-width="2"/></svg>
<div class="ab" style="left:639px;top:522px;width:10px;height:12px;background:#f8f8f8;border:1px solid #ccc"></div><div class="ab" style="left:642px;top:526px;width:5px;height:5px;background:#60b060;transform:rotate(45deg)"></div>
<div class="ab" style="left:657px;top:522px;width:13px;height:12px;border:3px solid #88c040;border-radius:50%"></div>
<div class="ab" style="left:676px;top:522px;width:12px;height:12px;background:#f4f4f4;border:1px solid #bbb"></div><div class="ab" style="left:677px;top:523px;width:7px;height:4px;background:#3a9a3a"></div><div class="ab" style="left:682px;top:528px;width:7px;height:7px;background:#2a3a50"></div>
<div class="ab" style="left:696px;top:522px;width:12px;height:12px;background:#f4f4f4;border:1px solid #bbb"></div><div class="ab" style="left:697px;top:523px;width:7px;height:4px;background:#4a9ac8"></div><div class="ab" style="left:702px;top:528px;width:7px;height:7px;background:#2a3a50"></div>
<div class="ab" style="left:513.5px;top:541.3px;width:507.5px;height:14.7px;background:#f0f0f0;border-top:1px solid #d8d8d8"></div>
<div class="t" style="left:514.50px;top:545.77px;font-size:7.00px;color:#404040;font-weight:normal;font-family:'Liberation Sans',sans-serif;transform:scaleX(0.842);transform-origin:0 0;">PRC Processing : 2.4.1.1</div>
<div class="t" style="left:585.80px;top:545.77px;font-size:7.00px;color:#404040;font-weight:normal;font-family:'Liberation Sans',sans-serif;transform:scaleX(0.850);transform-origin:0 0;">| Substructure : Z1250-1259-RETROFIT</div>
<div class="ab" style="left:725px;top:88px;width:297px;height:453px;background:#fff;border:1px solid #8a8a8a"></div>
<div class="ab" style="left:726px;top:88px;width:295px;height:12px;background:#3d3d3d"></div>
<div class="ab" style="left:729.5px;top:90px;width:27.5px;height:10px;background:#dcdcdc;border:1px solid #f0f0f0"></div>
<div class="t" style="left:735.00px;top:90.81px;font-size:7.20px;color:#222;font-weight:normal;font-family:'Liberation Sans',sans-serif;transform:scaleX(0.890);transform-origin:0 0;">Home</div>
<div class="t" style="left:762.30px;top:90.81px;font-size:7.20px;color:#ececec;font-weight:normal;font-family:'Liberation Sans',sans-serif;transform:scaleX(0.899);transform-origin:0 0;">Markup &amp; Measure</div>
<div class="t" style="left:828.00px;top:90.81px;font-size:7.20px;color:#ececec;font-weight:normal;font-family:'Liberation Sans',sans-serif;transform:scaleX(0.833);transform-origin:0 0;">Tools</div>
<div class="t" style="left:853.00px;top:90.81px;font-size:7.20px;color:#ececec;font-weight:normal;font-family:'Liberation Sans',sans-serif;transform:scaleX(0.814);transform-origin:0 0;">Resources</div>
<div class="ab" style="left:898px;top:92px;width:7px;height:4px;background:#eee;border-radius:1px"></div><div class="t" style="left:907px;top:91px;font-size:5px;color:#ddd">&#9660;</div>
<div class="ab" style="left:726px;top:100px;width:295px;height:15px;background:#fff"></div>
<div class="t" style="left:730.25px;top:104.74px;font-size:7.40px;color:#333;font-weight:normal;font-family:'Liberation Sans',sans-serif;transform:scaleX(0.787);transform-origin:0 0;">3D Pu...</div>
<div class="t" style="left:754px;top:103px;font-size:7px;color:#555">&#8628;</div>
<div class="ab" style="left:764px;top:102px;width:1px;height:11px;background:#bbb"></div>
<div class="ab" style="left:767.5px;top:102.5px;width:37px;height:10px;border:1px solid #a8a8a8;background:#fff"></div>
<div class="t" style="left:769.30px;top:104.74px;font-size:7.40px;color:#222;font-weight:normal;font-family:'Liberation Sans',sans-serif;transform:scaleX(0.765);transform-origin:0 0;">23</div>
<div class="t" style="left:798px;top:103px;font-size:6px;color:#888">&#8964;</div>
<div class="ab" style="left:811px;top:106px;width:44px;height:2px;background:#e2e2e2"></div>
<div class="ab" style="left:811.5px;top:103px;width:4px;height:7px;background:#2a6cc0;border-radius:0 0 2px 2px"></div>
<div class="ab" style="left:859px;top:102px;width:1px;height:11px;background:#bbb"></div>
<div class="ab" style="left:874.5px;top:102px;width:12.5px;height:12.5px;background:#b6d4e8;border:0.8px solid #8fb8d6"></div>
<svg class="ab" style="left:0;top:0" width="1024" height="120" viewBox="0 0 1024 120"><path d="M864.5 108 L868.3 104.2 L872.2 108 M865.6 107.2 V111.6 H871.2 V107.2" stroke="#5a5a5a" stroke-width="1.1" fill="none"/><rect x="867.4" y="109" width="1.8" height="2.6" fill="#5a5a5a"/><path d="M877.8 112 C876.6 110.6 876.4 108.6 877.4 107.6 L878.4 108.4 V104.6 Q879.2 103.6 880 104.6 V107.2 V104 Q880.8 103.2 881.6 104 V107.2 V104.6 Q882.4 103.8 883.2 104.6 V107.6 V105.6 Q884 104.8 884.6 105.6 V109.6 Q884.4 112.4 882.4 112.6 Z" fill="#f8f8f8" stroke="#444" stroke-width="0.7"/><circle cx="891.4" cy="107.4" r="3.1" stroke="#505050" stroke-width="1.2" fill="#f0f0f0"/><path d="M893.5 109.5 L896.0 112.0" stroke="#303030" stroke-width="1.8"/><path d="M895.2 103.4 H897.4 M896.3 102.3 V104.5" stroke="#333" stroke-width="0.8"/><circle cx="904" cy="107.4" r="3.1" stroke="#505050" stroke-width="1.2" fill="#f0f0f0"/><path d="M906.1 109.5 L908.6 112.0" stroke="#303030" stroke-width="1.8"/><path d="M902.4 107.4 H905.6 M904 105.8 V109" stroke="#666" stroke-width="0.8"/><circle cx="916.2" cy="107.4" r="3.1" stroke="#505050" stroke-width="1.2" fill="#f0f0f0"/><path d="M918.3000000000001 109.5 L920.8000000000001 112.0" stroke="#303030" stroke-width="1.8"/><path d="M916.8 104 A3.6 3.6 0 0 1 919.8 107" stroke="#555" stroke-width="0.9" fill="none"/><path d="M929.4 103 L931.4 105.2 H930.2 V106.8 H931.8 V105.6 L934 107.6 L931.8 109.6 V108.4 H930.2 V110 H931.4 L929.4 112.2 L927.4 110 H928.6 V108.4 H927 V109.6 L924.8 107.6 L927 105.6 V106.8 H928.6 V105.2 H927.4 Z" fill="#f4f4f4" stroke="#5a5a5a" stroke-width="0.7"/><path d="M941.8 102.8 V112.4" stroke="#555" stroke-width="1.1"/><ellipse cx="941.8" cy="107.6" rx="4.2" ry="2" stroke="#555" stroke-width="1" fill="none"/><path d="M945 106 L946.2 107.6 L944.2 108" stroke="#555" stroke-width="0.8" fill="none"/><circle cx="954.5" cy="107.6" r="4.3" stroke="#5a5a5a" stroke-width="1.1" fill="#f2f2f2"/><rect x="952.4" y="105.5" width="4.2" height="4.2" stroke="#5a5a5a" stroke-width="0.9" fill="none"/></svg>
<div class="ab" style="left:964px;top:107px;width:2px;height:2px;background:#222"></div>
<div class="ab" style="left:970px;top:102px;width:1px;height:11px;background:#bbb"></div>
<svg class="ab" style="left:0;top:0" width="1024" height="120" viewBox="0 0 1024 120"><g fill="none" stroke="#c4c4c4" stroke-width="1"><path d="M975.6 104 V111.5 M982 104 L977.6 107.8 L982 111.5 Z"/><path d="M993 104 L988.6 107.8 L993 111.5 Z"/><path d="M1000.4 104 L1004.8 107.8 L1000.4 111.5 Z"/><path d="M1011.6 104 L1016 107.8 L1011.6 111.5 Z M1018 104 V111.5"/></g></svg>
<svg class="ab" style="left:0;top:0" width="1024" height="556" viewBox="0 0 1024 556"><defs><linearGradient id="bg3" x1="0" y1="0" x2="0" y2="1"><stop offset="0" stop-color="#868686"/><stop offset="0.3" stop-color="#9c9c9c"/><stop offset="0.6" stop-color="#c4c4c4"/><stop offset="0.85" stop-color="#e6e6e6"/><stop offset="1" stop-color="#f6f6f6"/></linearGradient><linearGradient id="gw" x1="0" y1="0" x2="1" y2="0"><stop offset="0" stop-color="#b8b8b8"/><stop offset="0.2" stop-color="#f6f6f6"/><stop offset="0.5" stop-color="#f0f0f0"/><stop offset="0.78" stop-color="#c6c6c6"/><stop offset="0.92" stop-color="#8a8a8a"/><stop offset="1" stop-color="#3c3c3c"/></linearGradient><linearGradient id="gd" x1="0" y1="0" x2="1" y2="0"><stop offset="0" stop-color="#162c2c"/><stop offset="0.25" stop-color="#2e5252"/><stop offset="0.55" stop-color="#2b4d4d"/><stop offset="0.85" stop-color="#1e3838"/><stop offset="1" stop-color="#0e2020"/></linearGradient><clipPath id="v3c"><rect x="726" y="115" width="295" height="426"/></clipPath></defs><g clip-path="url(#v3c)"><rect x="726" y="115" width="295" height="426" fill="url(#bg3)"/>
<line x1="795.5" y1="115" x2="796.5" y2="541" stroke="#3c3c3c" stroke-width="3"/>
<line x1="795.8" y1="115" x2="796.8" y2="541" stroke="#e4e4e4" stroke-width="1.7"/>
<line x1="806.5" y1="115" x2="807.5" y2="541" stroke="#3c3c3c" stroke-width="4"/>
<line x1="806.8" y1="115" x2="807.8" y2="541" stroke="#ececec" stroke-width="2.7"/>
<line x1="901.5" y1="115" x2="902" y2="541" stroke="#3c3c3c" stroke-width="2.2"/>
<line x1="901.8" y1="115" x2="902.3" y2="541" stroke="#b8b8b8" stroke-width="0.9"/>
<line x1="915.5" y1="115" x2="916.5" y2="541" stroke="#3c3c3c" stroke-width="3.5"/>
<line x1="915.8" y1="115" x2="916.8" y2="541" stroke="#ececec" stroke-width="2.2"/>
<line x1="781" y1="175.6" x2="800" y2="175.6" stroke="#555" stroke-width="1.5"/><line x1="781" y1="175" x2="800" y2="175" stroke="#f4f4f4" stroke-width="1.5"/>
<line x1="778" y1="294.6" x2="800" y2="294.6" stroke="#555" stroke-width="1.5"/><line x1="778" y1="294" x2="800" y2="294" stroke="#f4f4f4" stroke-width="1.5"/>
<line x1="916" y1="373.6" x2="946" y2="373.6" stroke="#555" stroke-width="1.5"/><line x1="916" y1="373" x2="946" y2="373" stroke="#f4f4f4" stroke-width="1.5"/>
<line x1="757" y1="520.1" x2="876" y2="520.1" stroke="#555" stroke-width="1.5"/><line x1="757" y1="519.5" x2="876" y2="519.5" stroke="#f4f4f4" stroke-width="1.5"/>
<line x1="876" y1="520.6" x2="955" y2="521.6" stroke="#555" stroke-width="1.5"/><line x1="876" y1="520" x2="955" y2="521" stroke="#f4f4f4" stroke-width="1.5"/>
<line x1="830" y1="113" x2="934" y2="233" stroke="#454545" stroke-width="8"/><line x1="829" y1="113.5" x2="933" y2="233.5" stroke="#cdcdcd" stroke-width="6.5"/><line x1="828" y1="114" x2="932" y2="234" stroke="#e8e8e8" stroke-width="2.5"/>
<line x1="873.5" y1="176" x2="897" y2="200" stroke="#3a3a3a" stroke-width="4.5"/><line x1="873" y1="176.5" x2="896.5" y2="200.5" stroke="#e4e4e4" stroke-width="2.6"/>
<path d="M769.5 112.0 Q777.8 114.5 786.1 112.0 L782.1 167.0 Q773.8 169.5 765.5 167.0 Z" fill="url(#gw)"/>
<path d="M765.5 167.0 Q773.8 169.5 782.1 167.0 L764.0 416.5 Q755.8 419.0 747.5 416.5 Z" fill="url(#gd)"/>
<path d="M747.5 416.5 Q755.8 419.0 764.0 416.5 L760.7 462.0 Q752.5 464.5 744.2 462.0 Z" fill="url(#gw)"/>
<path d="M744.2 462.0 Q752.5 464.5 760.7 462.0 L754.7 545.0 Q746.4 547.5 738.2 545.0 Z" fill="url(#gd)"/>
<line x1="834" y1="341" x2="858" y2="316" stroke="#3a3a3a" stroke-width="5"/><line x1="834" y1="341" x2="858" y2="316" stroke="#e2e2e2" stroke-width="3.4" transform="translate(-0.5,0.6)"/>
<line x1="784.5" y1="393" x2="808" y2="367" stroke="#3a3a3a" stroke-width="5"/><line x1="784.5" y1="393" x2="808" y2="367" stroke="#e2e2e2" stroke-width="3.4" transform="translate(-0.5,0.6)"/>
<line x1="818.6" y1="484" x2="847.8" y2="508" stroke="#3a3a3a" stroke-width="5"/><line x1="818.6" y1="484" x2="847.8" y2="508" stroke="#e2e2e2" stroke-width="3.4" transform="translate(-0.5,0.6)"/>
<line x1="799" y1="428.5" x2="838" y2="429" stroke="#8a8a8a" stroke-width="1.4"/><line x1="799" y1="430.0" x2="838" y2="430.5" stroke="#f2f2f2" stroke-width="1.8"/>
<line x1="857" y1="430" x2="896" y2="431" stroke="#8a8a8a" stroke-width="1.4"/><line x1="857" y1="431.5" x2="896" y2="432.5" stroke="#f2f2f2" stroke-width="1.8"/>
<line x1="858" y1="517" x2="903" y2="486" stroke="#d6d6d6" stroke-width="6"/><line x1="903" y1="481" x2="935" y2="458" stroke="#d6d6d6" stroke-width="6"/>
<line x1="776" y1="237.5" x2="937" y2="241.7" stroke="#172e2e" stroke-width="8.5"/><line x1="776" y1="237.5" x2="937" y2="241.7" stroke="#4a7676" stroke-width="3.8"/><line x1="776" y1="237.5" x2="937" y2="241.7" stroke="#8ab6b4" stroke-width="1.6"/>
<line x1="935" y1="248" x2="765" y2="430" stroke="#172e2e" stroke-width="10"/><line x1="935" y1="248" x2="765" y2="430" stroke="#4a7676" stroke-width="4.5"/><line x1="935" y1="248" x2="765" y2="430" stroke="#8ab6b4" stroke-width="1.6"/>
<line x1="759" y1="436.5" x2="953" y2="441.2" stroke="#172e2e" stroke-width="8.5"/><line x1="759" y1="436.5" x2="953" y2="441.2" stroke="#4a7676" stroke-width="3.8"/><line x1="759" y1="436.5" x2="953" y2="441.2" stroke="#8ab6b4" stroke-width="1.6"/>
<line x1="758" y1="445.5" x2="858" y2="526" stroke="#172e2e" stroke-width="10"/><line x1="758" y1="445.5" x2="858" y2="526" stroke="#4a7676" stroke-width="4.5"/><line x1="758" y1="445.5" x2="858" y2="526" stroke="#8ab6b4" stroke-width="1.6"/>
<line x1="857" y1="526" x2="952" y2="449" stroke="#7a6a00" stroke-width="7.5"/><line x1="856.5" y1="525" x2="951.5" y2="448" stroke="#ecd81a" stroke-width="5"/><line x1="856" y1="524" x2="951" y2="447" stroke="#faf080" stroke-width="1.6"/>
<path d="M926.4 112.0 Q933.3 114.5 940.2 112.0 L945.9 185.0 Q938.7 187.5 931.5 185.0 Z" fill="url(#gw)"/>
<path d="M931.5 185.0 Q938.7 187.5 945.9 185.0 L953.7 283.0 Q946.1 285.5 938.4 283.0 Z" fill="url(#gd)"/>
<path d="M938.4 283.0 Q946.1 285.5 953.7 283.0 L964.8 424.0 Q956.6 426.5 948.3 424.0 Z" fill="url(#gw)"/>
<path d="M948.3 424.0 Q956.6 426.5 964.8 424.0 L971.3 506.0 Q962.7 508.5 954.1 506.0 Z" fill="url(#gd)"/>
<path d="M954.1 506.0 Q962.7 508.5 971.3 506.0 L974.4 545.0 Q965.6 547.5 956.9 545.0 Z" fill="url(#gw)"/>
<path d="M838.5 237.5 L839.5 232 L882 231 L883.5 237 L881 237 L880 234 L842 234.8 L841 238 Z" fill="#f0a282" stroke="#d07858" stroke-width="0.6"/>
<path d="M979 131 L983 127 L1006 127 L1007 131 L1007 160 L979 160 Z" fill="#cacaca"/><path d="M979 131 L983 127 L1006 127 L1007 131 Z" fill="#dadada"/><rect x="979" y="139" width="28" height="21" fill="#c4c4c4"/><text x="993" y="135.5" font-size="4.5" fill="#a0a0a0" text-anchor="middle" font-family="Liberation Sans" font-weight="bold">TOP</text><text x="993" y="152" font-size="5.5" fill="#9a9a9a" text-anchor="middle" font-family="Liberation Sans" font-weight="bold">FRONT</text>
</g></svg>
<div class="ab" style="left:726px;top:521px;width:75px;height:20px;background:#ececec;border:1px solid #cfcfcf"></div>
<div class="ab" style="left:731px;top:527px;width:7px;height:7px;border:1px solid #c8c8c8;background:#fafafa"></div>
<svg class="ab" style="left:731.5px;top:527px" width="7" height="7"><path d="M1 3.5 L3 5.5 L6.2 1" stroke="#d0a070" stroke-width="1.1" fill="none"/></svg>
<svg class="ab" style="left:790.5px;top:525px" width="6" height="11"><path d="M1 4 L3 1.5 L5 4 M1 7 L3 9.5 L5 7" stroke="#e8a050" stroke-width="1" fill="none"/></svg>
<div class="t" style="left:737.50px;top:528.07px;font-size:7.00px;color:#555;font-weight:normal;font-family:'Liberation Sans',sans-serif;transform:scaleX(0.834);transform-origin:0 0;">Zoom by</div>
<div class="ab" style="left:767px;top:524px;width:31px;height:13px;border:1px solid #c8c8c8;background:#fafafa"></div>
<div class="t" style="left:769.50px;top:528.07px;font-size:7.00px;color:#555;font-weight:normal;font-family:'Liberation Sans',sans-serif;transform:scaleX(0.841);transform-origin:0 0;">50.000</div>
<div class="ab" style="left:802.5px;top:522px;width:17px;height:17px;background:#e6eaee;border:1px solid #c8ccd0"></div>
<svg class="ab" style="left:803.5px;top:523px" width="15" height="15" viewBox="0 0 15 15"><path d="M2 7.5 A5.5 5.5 0 0 1 12.8 6" stroke="#2f8fd8" stroke-width="3" fill="none"/><path d="M13 7.5 A5.5 5.5 0 0 1 2.2 9" stroke="#28b848" stroke-width="3" fill="none"/><path d="M11 3.5 L14.5 6.8 L10 7.6 Z" fill="#2f8fd8"/><path d="M4 11.5 L0.5 8.2 L5 7.4 Z" fill="#28b848"/><circle cx="7.5" cy="7.5" r="2.2" fill="#f0f8ff"/></svg>
<svg class="ab" style="left:0;top:0;opacity:0.999" width="1024" height="556" viewBox="0 0 1024 556"><line x1="535" y1="353" x2="306" y2="183.5" stroke="#fff" stroke-width="3"/><path d="M299.5 178.5 L313 181 L304 192 Z" fill="#fff"/><line x1="655" y1="352" x2="851" y2="239.5" stroke="#fff" stroke-width="3"/><path d="M858.5 235.5 L851 246 L845 235 Z" fill="#fff"/><rect x="829.3" y="219" width="63.7" height="37.5" fill="none" stroke="#fff" stroke-width="2.2"/><g font-family="Liberation Sans" font-size="15.3" stroke="#e6e6e6" stroke-width="3.2" stroke-linejoin="round" fill="none"><text x="832.8" y="274.5" textLength="143.8" lengthAdjust="spacingAndGlyphs">Structure Commander</text><text x="844.5" y="290" textLength="121.1" lengthAdjust="spacingAndGlyphs">Anode Component</text></g><g font-family="Liberation Sans" font-size="15.3" stroke="#2a2a2a" stroke-width="0.35" fill="#2a2a2a"><text x="832.8" y="274.5" textLength="143.8" lengthAdjust="spacingAndGlyphs">Structure Commander</text><text x="844.5" y="290" textLength="121.1" lengthAdjust="spacingAndGlyphs">Anode Component</text></g></svg>
</body></html>
